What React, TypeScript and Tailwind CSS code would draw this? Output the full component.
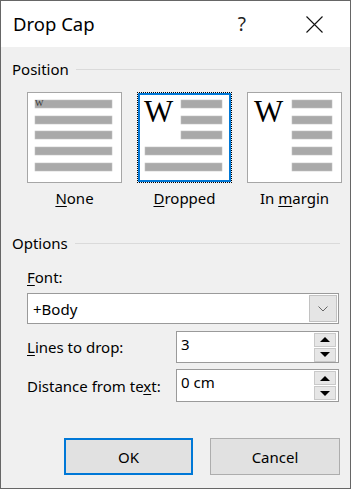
import React from "react";

const font = { fontFamily: '"Noto Sans", "Open Sans", sans-serif' };

const Line = ({ x, y, w }: { x: number; y: number; w: number }) => (
  <rect x={x} y={y} width={w} height={8} fill="#a9a9a9" stroke="#c4c4c4" strokeWidth={0.6} />
);

const rows = [8, 24, 39, 55, 71];

const NoneThumb = () => (
  <svg width="93" height="89" viewBox="1 1 93 89">
    {rows.map((y) => (
      <Line key={y} x={8} y={y} w={77} />
    ))}
    <text x={8} y={14} fontSize="9" fontFamily="Liberation Serif, serif" fill="#333">
      W
    </text>
  </svg>
);

const DroppedThumb = () => (
  <svg width="89" height="85" viewBox="3 3 89 85">
    {rows.slice(0, 3).map((y) => (
      <Line key={y} x={44} y={y} w={41} />
    ))}
    {rows.slice(3).map((y) => (
      <Line key={y} x={8} y={y} w={77} />
    ))}
    <text x={7} y={30} fontSize="31" fontFamily="Liberation Serif, serif" fill="#000">
      W
    </text>
  </svg>
);

const MarginThumb = () => (
  <svg width="93" height="89" viewBox="1 1 93 89">
    {rows.map((y) => (
      <Line key={y} x={45} y={y} w={40} />
    ))}
    <text x={7} y={30} fontSize="31" fontFamily="Liberation Serif, serif" fill="#000">
      W
    </text>
  </svg>
);

const SectionHeader = ({ label }: { label: string }) => (
  <div className="flex items-center h-[20px] pl-[11px] pr-[10px]">
    <span className="text-[15px] leading-[20px] text-black">{label}</span>
    <div className="flex-1 h-px bg-[#dadada] ml-[7px]" />
  </div>
);

const SpinButtons = () => (
  <div className="flex flex-col gap-px mr-[2px]">
    <div className="w-[22px] h-[14px] bg-[#e6e6e6] border border-[#c9c9c9] flex items-center justify-center">
      <svg width="10" height="5" viewBox="0 0 10 5">
        <path d="M0 5 L5 0 L10 5 Z" fill="#000" />
      </svg>
    </div>
    <div className="w-[22px] h-[14px] bg-[#e6e6e6] border border-[#c9c9c9] flex items-center justify-center">
      <svg width="10" height="5" viewBox="0 0 10 5">
        <path d="M0 0 L5 5 L10 0 Z" fill="#000" />
      </svg>
    </div>
  </div>
);

export default function App() {
  return (
    <div
      className="w-[351px] h-[489px] border border-[#666666] flex flex-col bg-[#f0f0f0] text-black"
      style={font}
    >
      {/* title bar */}
      <div className="h-[46px] bg-white flex items-center">
        <span className="pl-[12px] text-[18.5px] leading-[26px] flex-1">Drop Cap</span>
        <span className="text-[19px] leading-[26px] text-[#222] mr-[60px]">?</span>
        <svg width="17" height="17" viewBox="0 0 17 17" className="mr-[27px]">
          <path d="M0.5 0.5 L16.5 16.5 M16.5 0.5 L0.5 16.5" stroke="#111" strokeWidth="1.1" />
        </svg>
      </div>

      <div className="pt-[12px]">
        <SectionHeader label="Position" />

        <div className="flex gap-[15px] pl-[26px] mt-[13px]">
          <div className="flex flex-col items-center w-[95px]">
            <div className="w-[95px] h-[91px] bg-white border border-[#a6a6a6]">
              <NoneThumb />
            </div>
            <span className="mt-[5px] text-[15px] leading-[20px]">
              <u className="underline-offset-2">N</u>one
            </span>
          </div>
          <div className="flex flex-col items-center w-[95px]">
            <div className="w-[95px] h-[91px] border border-dotted border-black">
              <div className="w-full h-full border-2 border-[#0078d7] bg-white">
                <DroppedThumb />
              </div>
            </div>
            <span className="mt-[5px] text-[15px] leading-[20px]">
              <u className="underline-offset-2">D</u>ropped
            </span>
          </div>
          <div className="flex flex-col items-center w-[95px]">
            <div className="w-[95px] h-[91px] bg-white border border-[#a6a6a6]">
              <MarginThumb />
            </div>
            <span className="mt-[5px] text-[15px] leading-[20px]">
              In <u className="underline-offset-2">m</u>argin
            </span>
          </div>
        </div>

        <div className="mt-[25px]">
          <SectionHeader label="Options" />
        </div>

        <div className="pl-[26px] pr-[11px]">
          <div className="mt-[14px] text-[15px] leading-[20px]">
            <u className="underline-offset-2">F</u>ont:
          </div>
          <div className="mt-[6px] h-[31px] bg-white border border-[#9a9a9a] flex items-center">
            <span className="pl-[5px] text-[15px] leading-[20px] flex-1">+Body</span>
            <div className="w-[28px] h-[27px] mr-px bg-[#e5e5e5] border border-[#c2c2c2] flex items-center justify-center">
              <svg width="10" height="6" viewBox="0 0 10 6">
                <path d="M0.5 0.5 L5 5 L9.5 0.5" stroke="#666" strokeWidth="1" fill="none" />
              </svg>
            </div>
          </div>

          <div className="mt-[7px] flex items-center">
            <span className="flex-1 text-[15px] leading-[20px]">
              <u className="underline-offset-2">L</u>ines to drop:
            </span>
            <div className="w-[163px] h-[32px] bg-white border border-[#9a9a9a] flex items-center">
              <span className="pl-[4px] text-[15px] leading-[20px] flex-1 self-start pt-[2px]">3</span>
              <SpinButtons />
            </div>
          </div>

          <div className="mt-[6px] flex items-center">
            <span className="flex-1 text-[15px] leading-[20px]">
              Distance from te<u className="underline-offset-2">x</u>t:
            </span>
            <div className="w-[163px] h-[33px] bg-white border border-[#9a9a9a] flex items-center">
              <span className="pl-[4px] text-[15px] leading-[20px] flex-1 self-start pt-[2px]">0 cm</span>
              <SpinButtons />
            </div>
          </div>
        </div>

        <div className="flex gap-[17px] pl-[63px] mt-[36px]">
          <button className="w-[129px] h-[37px] bg-[#e1e1e1] border-2 border-[#0078d7] text-[15px] leading-[20px]">
            OK
          </button>
          <button className="w-[130px] h-[37px] bg-[#e1e1e1] border border-[#adadad] text-[15px] leading-[20px]">
            Cancel
          </button>
        </div>
      </div>
    </div>
  );
}
